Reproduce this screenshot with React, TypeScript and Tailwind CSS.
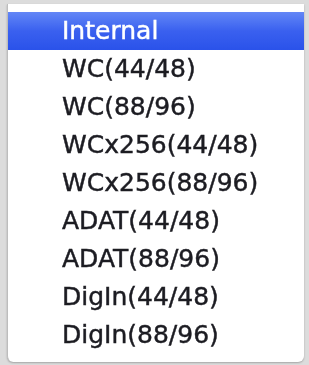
import React from 'react';

const items = [
  'Internal',
  'WC(44/48)',
  'WC(88/96)',
  'WCx256(44/48)',
  'WCx256(88/96)',
  'ADAT(44/48)',
  'ADAT(88/96)',
  'DigIn(44/48)',
  'DigIn(88/96)',
];

const App: React.FC = () => {
  const selected = 0;
  return (
    <div className="w-[309px] h-[365px] bg-[#dcdcdc] pt-[4px] pl-[7px] pr-[5px] pb-[3px] overflow-hidden">
      <div className="h-full bg-white border-l border-[#bdbdbd] rounded-b-[6px] pt-[8px] pb-[8px] shadow-[0_1px_2px_rgba(0,0,0,0.25)]">
        <ul className="flex flex-col font-['DejaVu_Sans',sans-serif] text-[25px] leading-[38px] text-[#1c1c22] [-webkit-text-stroke:0.45px_currentColor] blur-[0.3px]">
          {items.map((label, i) => (
            <li
              key={label}
              className={`h-[38px] pl-[54px] whitespace-nowrap ${
                i === selected
                  ? 'bg-gradient-to-b from-[#6386f6] via-[#3a60ef] to-[#2a52ea] text-white'
                  : ''
              }`}
            >
              {label}
            </li>
          ))}
        </ul>
      </div>
    </div>
  );
};

export default App;
